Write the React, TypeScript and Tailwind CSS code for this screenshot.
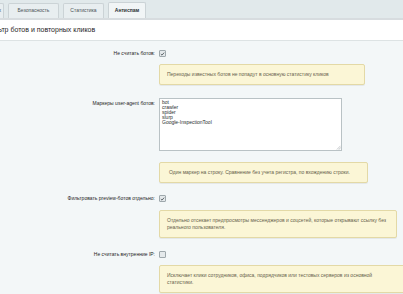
import React from "react";

function Check({ checked }: { checked: boolean }) {
  return (
    <span className="inline-flex h-[7px] w-[7px] items-center justify-center rounded-[1px] border border-[#9ea8ac] bg-[#e4e9eb]">
      {checked && (
        <svg viewBox="0 0 7 7" className="h-[6px] w-[6px]">
          <path d="M1.2 3.6 L2.8 5.1 L5.8 1.6" fill="none" stroke="#4a5358" strokeWidth="1.2" />
        </svg>
      )}
    </span>
  );
}

function Hint({ w, children }: { w: string; children: React.ReactNode }) {
  return (
    <div
      className={`${w} rounded-[2px] border border-[#e3d9a6] bg-[#fbf6d6] py-[6px] pl-[7px] pr-[8px] text-[5px] leading-[7px] text-[#67624c] shadow-[0_1px_0_rgba(0,0,0,0.06)]`}
    >
      {children}
    </div>
  );
}

export default function App() {
  const markers = ["bot", "crawler", "spider", "slurp", "Google-InspectionTool"];
  return (
    <div
      className="h-[294px] w-[403px] overflow-hidden bg-[#f3f7f8]"
      style={{ fontFamily: '"Liberation Sans", Arial, sans-serif' }}
    >
      {/* tab bar */}
      <div className="flex h-[20px] items-end gap-[4px] overflow-hidden border-b-[2px] border-[#d7dcdf] bg-[#e1e9eb]">
        <div className="-ml-[36px] flex h-[15px] w-[40px] shrink-0 items-center justify-end rounded-t-[2px] border border-b-0 border-[#cbd3d6] bg-[#e8eef0] pr-[2px] text-[5px] text-[#4b5256]">
          Обработчик
        </div>
        <div className="flex h-[15px] w-[51px] shrink-0 items-center justify-center rounded-t-[2px] border border-b-0 border-[#cbd3d6] bg-[#e8eef0] text-[5px] text-[#4b5256]">
          Безопасность
        </div>
        <div className="flex h-[15px] w-[41px] shrink-0 items-center justify-center rounded-t-[2px] border border-b-0 border-[#cbd3d6] bg-[#e8eef0] text-[5px] text-[#4b5256]">
          Статистика
        </div>
        <div className="flex h-[16px] w-[38px] shrink-0 items-center justify-center rounded-t-[2px] border border-b-0 border-[#cbd3d6] bg-[#f1f5f6] text-[5px] font-bold text-[#2b3033]">
          Антиспам
        </div>
      </div>

      {/* header */}
      <div className="flex h-[21px] items-center border-b border-[#dde3e4] bg-white">
        <span className="-ml-[15px] whitespace-nowrap text-[7px] text-[#1f2326]">
          Фильтр ботов и повторных кликов
        </span>
      </div>

      {/* form */}
      <div className="grid grid-cols-[155px_1fr] gap-x-[4px] pt-[9px] text-[5px] text-[#1f2326]">
        {/* row 1 */}
        <div className="text-right leading-[7px]">Не считать ботов:</div>
        <div className="flex h-[7px] items-center">
          <Check checked />
        </div>
        <div />
        <div className="mt-[7px]">
          <Hint w="w-[206px]">Переходы известных ботов не попадут в основную статистику кликов</Hint>
        </div>

        {/* row 2 */}
        <div className="mt-[13px] pt-[1.5px] text-right leading-[7px]">Маркеры user-agent ботов:</div>
        <div className="relative mt-[13px] h-[53px] w-[183px]">
          <textarea
            readOnly
            value={markers.join("\n")}
            className="block h-full w-full resize-none overflow-hidden border border-[#b9c2c5] bg-white px-[2px] py-[1px] text-[5px] leading-[5px] text-[#2a2e31] outline-none"
            style={{ fontFamily: '"Liberation Sans", Arial, sans-serif' }}
          />
          <svg viewBox="0 0 5 5" className="absolute bottom-[1px] right-[1px] h-[5px] w-[5px]">
            <path d="M4.5 0.8 L0.8 4.5 M4.5 2.3 L2.3 4.5 M4.5 3.6 L3.6 4.5" stroke="#9aa3a7" strokeWidth="0.5" />
          </svg>
        </div>
        <div />
        <div className="mt-[11px]">
          <Hint w="w-[209px]">
            <span className="pl-[2px]">Один маркер на строку. Сравнение без учета регистра, по вхождению строки.</span>
          </Hint>
        </div>

        {/* row 3 */}
        <div className="mt-[12px] text-right leading-[7px]">Фильтровать preview-ботов отдельно:</div>
        <div className="mt-[12px] flex h-[7px] items-center">
          <Check checked />
        </div>
        <div />
        <div className="mt-[8px]">
          <Hint w="w-[238px]">
            Отдельно отсекает предпросмотры мессенджеров и соцсетей, которые открывают ссылку без
            <br />
            реального пользователя.
          </Hint>
        </div>

        {/* row 4 */}
        <div className="mt-[13px] text-right leading-[7px]">Не считать внутренние IP:</div>
        <div className="mt-[13px] flex h-[7px] items-center">
          <Check checked={false} />
        </div>
        <div />
        <div className="mt-[7px]">
          <Hint w="w-[250px]">
            Исключает клики сотрудников, офиса, подрядчиков или тестовых серверов из основной
            <br />
            статистики.
          </Hint>
        </div>
      </div>
    </div>
  );
}
